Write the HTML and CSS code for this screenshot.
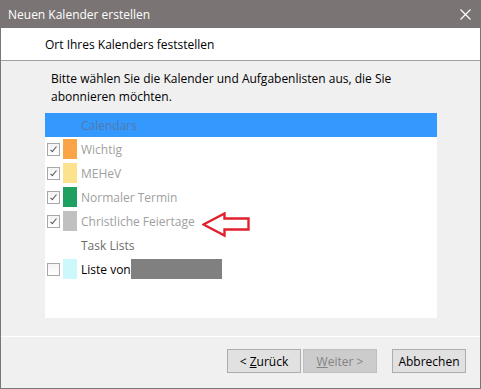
FILE: index.html
```html
<!DOCTYPE html>
<html lang="de">
<head>
<meta charset="UTF-8" />
<title>Neuen Kalender erstellen</title>
<link rel="stylesheet" href="styles.css">
</head>
<body>

<div class="window">
  <div class="titlebar">
    <span>Neuen Kalender erstellen</span>
    <svg class="close" width="11" height="11" viewBox="0 0 11 11">
      <path d="M0.5 0.5 L10.5 10.5 M10.5 0.5 L0.5 10.5" stroke="#fff" stroke-width="1.2"/>
    </svg>
  </div>

  <div class="header">Ort Ihres Kalenders feststellen</div>

  <div class="content">
    <p class="intro">Bitte wählen Sie die Kalender und Aufgabenlisten aus, die Sie abonnieren möchten.</p>

    <div class="listbox">
      <div class="row group selected">Calendars</div>
      <div class="row disabled">
        <span class="check on"></span><span class="swatch orange"></span>Wichtig
      </div>
      <div class="row disabled">
        <span class="check on"></span><span class="swatch yellow"></span>MEHeV
      </div>
      <div class="row disabled">
        <span class="check on"></span><span class="swatch green"></span>Normaler Termin
      </div>
      <div class="row disabled">
        <span class="check on"></span><span class="swatch gray"></span>Christliche Feiertage
      </div>
      <div class="row group tasks">Task Lists</div>
      <div class="row">
        <span class="check"></span><span class="swatch cyan"></span>Liste von<span class="redacted"></span>
      </div>

      <!-- roter Pfeil als Markierung -->
      <svg class="arrow" width="48" height="26" viewBox="0 0 48 26">
        <path d="M1.5 12.5 L22.5 1.5 L22.5 6.5 L46.5 6.5 L46.5 17.5 L22.5 17.5 L22.5 23.5 Z" fill="#fff" stroke="#e0202c" stroke-width="2.4" stroke-linejoin="miter"/>
      </svg>
    </div>
  </div>

  <div class="footer">
    <div class="btn-pair">
      <button class="btn">&lt; <u>Z</u>urück</button>
      <button class="btn" disabled><u>W</u>eiter &gt;</button>
    </div>
    <button class="btn">Abbrechen</button>
  </div>
</div>

</body>
</html>
```

FILE: styles.css
```css
/* Grundlayout */
body {
  margin: 0;
  font-family: "Open Sans", "Noto Sans", sans-serif;
  font-size: 12px;
}

.window {
  width: 481px;
  height: 389px;
  box-sizing: border-box;
  border: 1px solid #777;
  border-top: none;
  background-color: #f0f0f0;
  display: flex;
  flex-direction: column;
}

/* Titelleiste */
.titlebar {
  height: 28px;
  background-color: #7a7474;
  color: #fff;
  display: flex;
  justify-content: space-between;
  align-items: center;
  padding: 0 10px 0 8px;
  margin: 0 -1px;
}

/* Kopfbereich */
.header {
  background-color: #fff;
  border-bottom: 1px solid #a0a0a0;
  padding-left: 44px;
  display: flex;
  align-items: center;
  box-sizing: border-box;
  height: 33px;
}

.content {
  padding: 9px 0 0 44px;
  height: 275px;
  box-sizing: border-box;
}

.intro {
  margin: 0 0 7px 6px;
  line-height: 18px;
  width: 380px;
}

/* Liste */
.listbox {
  position: relative;
  width: 392px;
  height: 205px;
  background-color: #fff;
}

.row {
  height: 24px;
  display: flex;
  align-items: center;
  padding-left: 2px;
  color: #000;
}

.row.group {
  padding-left: 36px;
  color: #6d6d6d;
}

.row.selected {
  background-color: #3399ff;
  color: #5578a8;
}

.row.disabled {
  color: #a0a0a0;
}

.check {
  width: 11px;
  height: 11px;
  border: 1px solid #a8a8a8;
  background: linear-gradient(#f4f4f4, #fff);
  margin-right: 3px;
  position: relative;
}

.check.on::after {
  content: "";
  position: absolute;
  left: 4px;
  top: 1px;
  width: 2px;
  height: 6px;
  border: solid #555;
  border-width: 0 1.5px 1.5px 0;
  transform: rotate(40deg);
}

.swatch {
  width: 14px;
  height: 20px;
  margin-right: 4px;
}

.orange { background-color: #f9a446; }
.yellow { background-color: #fbe38e; }
.green { background-color: #1ea060; }
.gray { background-color: #c0c0c0; }
.cyan { background-color: #ccf8fc; }

.redacted {
  width: 91px;
  height: 20px;
  background-color: #808080;
  margin-left: 0;
}

.arrow {
  position: absolute;
  left: 157px;
  top: 99px;
}

/* Schaltflächen */
.footer {
  flex: 1;
  border-top: 1px solid #fff;
  display: flex;
  justify-content: flex-end;
  align-items: flex-start;
  padding: 12px 14px 0 0;
  gap: 15px;
}

.btn-pair {
  display: flex;
  gap: 2px;
}

.btn {
  width: 74px;
  height: 24px;
  font-family: inherit;
  font-size: 12px;
  background-color: #e1e1e1;
  border: 1px solid #adadad;
  padding: 0;
  color: #000;
}

.btn:disabled {
  background-color: #cccccc;
  border-color: #bfbfbf;
  color: #838383;
}
```
